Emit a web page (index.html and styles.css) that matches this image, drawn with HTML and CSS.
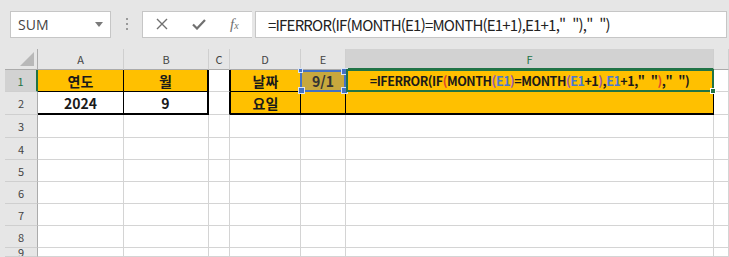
FILE: index.html
```html
<!DOCTYPE html>
<html lang="ko">
<head>
    <meta charset="UTF-8">
    <title>IFERROR 날짜</title>
    <link rel="stylesheet" href="styles.css">
</head>
<body>
    <!-- Formula bar -->
    <div class="formula-bar">
        <div class="name-box">
            <span class="name-text">SUM</span>
            <svg class="drop" width="8" height="5" viewBox="0 0 8 5"><path d="M0 0 L8 0 L4 5 Z" fill="#7a7a7a"/></svg>
        </div>
        <div class="grip"><i></i><i></i><i></i></div>
        <div class="fx-buttons">
            <svg width="12" height="12" viewBox="0 0 12 12"><path d="M1 1 L11 11 M11 1 L1 11" stroke="#707070" stroke-width="1.4"/></svg>
            <svg width="14" height="12" viewBox="0 0 14 12"><path d="M1 6.5 L5 10.5 L13 2" stroke="#707070" stroke-width="2.2" fill="none"/></svg>
            <span class="fx">f<sub>x</sub></span>
        </div>
        <div class="formula-input">=IFERROR(IF(MONTH(E1)=MONTH(E1+1),E1+1,"&nbsp; "),"&nbsp; ")</div>
    </div>

    <!-- Sheet -->
    <div class="sheet">
        <div class="corner"><span class="tri"></span></div>
        <div class="col-head">A</div>
        <div class="col-head">B</div>
        <div class="col-head">C</div>
        <div class="col-head">D</div>
        <div class="col-head">E</div>
        <div class="col-head selected">F</div>
        <div class="col-head last"></div>

        <div class="row-head selected">1</div>
        <div class="cell gold bold b-right b-bottom">연도</div>
        <div class="cell gold bold thick-right b-bottom">월</div>
        <div class="cell b-right-only"></div>
        <div class="cell gold bold left-thick b-right b-bottom">날짜</div>
        <div class="cell olive bold b-right b-bottom">9/1
            <span class="ref-box"><i class="h tl"></i><i class="h tr"></i><i class="h bl"></i><i class="h br"></i></span>
        </div>
        <div class="cell gold bold formula-cell">=IFERROR(IF<span class="red">(</span>MONTH<span class="purple">(</span><span class="blue">E1</span><span class="purple">)</span>=MONTH<span class="purple">(</span><span class="blue">E1</span>+1<span class="purple">)</span>,<span class="blue">E1</span>+1,"&nbsp; "<span class="red">)</span>,"&nbsp; ")
            <span class="active"><i class="fill-handle"></i></span>
        </div>
        <div class="cell"></div>

        <div class="row-head">2</div>
        <div class="cell bold b-right thick-bottom">2024</div>
        <div class="cell bold thick-right thick-bottom">9</div>
        <div class="cell b-right-only"></div>
        <div class="cell gold bold left-thick b-right thick-bottom">요일</div>
        <div class="cell gold b-right thick-bottom"></div>
        <div class="cell gold b-right thick-bottom"></div>
        <div class="cell"></div>
    </div>
    <div class="sheet rest" id="rest"></div>

    <script>
        // Empty rows 3 to 9
        const rest = document.getElementById('rest');
        for (let r = 3; r <= 9; r++) {
            let html = `<div class="row-head">${r}</div>`;
            for (let c = 0; c < 7; c++) {
                html += '<div class="cell"></div>';
            }
            rest.insertAdjacentHTML('beforeend', html);
        }
    </script>
</body>
</html>
```

FILE: styles.css
```css
/* Page reset */
body, html {
    margin: 0;
    padding: 0;
    height: 100%;
    overflow: hidden;
    background: #e6e6e6;
    font-family: "Noto Sans CJK KR", "Noto Sans", sans-serif;
}

/* Formula bar */
.formula-bar {
    display: flex;
    align-items: center;
    height: 48px;
    padding: 0 2px 0 10px;
    box-sizing: border-box;
}

.name-box {
    width: 101px;
    height: 27px;
    box-sizing: border-box;
    background: #fff;
    border: 1px solid #c6c6c6;
    display: flex;
    align-items: center;
    justify-content: space-between;
    padding: 0 7px 0 7px;
}

.name-text {
    font-family: "Open Sans", sans-serif;
    font-size: 14px;
    color: #444;
}

.grip {
    width: 31px;
    display: flex;
    flex-direction: column;
    align-items: center;
    gap: 3px;
}

.grip i {
    width: 2px;
    height: 2px;
    background: #9a9a9a;
}

.fx-buttons {
    width: 110px;
    height: 27px;
    box-sizing: border-box;
    background: #fff;
    border: 1px solid #c6c6c6;
    border-right: none;
    display: flex;
    align-items: center;
    gap: 24px;
    padding-left: 13px;
}

.fx {
    font-family: "Liberation Serif", serif;
    font-style: italic;
    font-size: 15px;
    color: #707070;
    line-height: 1;
}

.fx sub {
    font-size: 10px;
    vertical-align: 0;
}

.formula-input {
    flex: 1;
    height: 27px;
    margin-left: 3px;
    box-sizing: border-box;
    background: #fff;
    border: 1px solid #c6c6c6;
    padding-left: 12px;
    font-size: 15px;
    letter-spacing: -0.8px;
    line-height: 25px;
    color: #222;
    white-space: nowrap;
    overflow: hidden;
}

/* Sheet grid */
.sheet {
    display: grid;
    grid-template-columns: 33px 86px 85px 21px 71px 45px 368px 1fr;
    grid-template-rows: 21px 22px 23px;
    margin-left: 5px;
    margin-top: 1px;
    background: #fff;
}

.sheet.rest {
    margin-top: 0;
    grid-template-rows: 23px repeat(5, 22px) 9px;
    overflow: hidden;
}

.corner,
.col-head,
.row-head {
    background: #e6e6e6;
    color: #444;
    font-size: 11px;
    display: flex;
    align-items: center;
    justify-content: center;
    box-sizing: border-box;
}

.corner {
    position: relative;
    border-right: 1px solid #ababab;
    border-bottom: 1px solid #ababab;
}

.corner .tri {
    position: absolute;
    right: 3px;
    bottom: 3px;
    width: 0;
    height: 0;
    border-left: 14px solid transparent;
    border-bottom: 14px solid #b8b8b8;
}

.col-head {
    border-right: 1px solid #cfcfcf;
    border-bottom: 1px solid #ababab;
}

.col-head.selected {
    background: #d2d2d2;
    color: #217346;
    border-bottom: 2px solid #217346;
}

.row-head {
    border-right: 1px solid #ababab;
    border-bottom: 1px solid #cfcfcf;
    overflow: hidden;
}

.row-head.selected {
    background: #d2d2d2;
    color: #217346;
    border-right: 2px solid #217346;
}

.cell {
    position: relative;
    box-sizing: border-box;
    border-right: 1px solid #d4d4d4;
    border-bottom: 1px solid #d4d4d4;
    background: #fff;
    font-size: 14px;
    color: #1a1a1a;
    display: flex;
    align-items: center;
    justify-content: center;
    white-space: nowrap;
}

.bold { font-weight: bold; }
.gold { background: #ffc000; }
.olive { background: #c8a83d; color: #333; }

/* Range borders */
.b-right { border-right-color: #000; }
.b-bottom { border-bottom-color: #000; }
.b-right-only { border-right-color: #000; }
.thick-right { border-right: 2px solid #000; }
.thick-bottom { border-bottom: 2px solid #000; }
.left-thick { border-left: 1px solid #000; }

/* Formula being edited in F1 */
.formula-cell {
    border-right: 1px solid #000;
    border-bottom: 1px solid #000;
    font-size: 12.5px;
    letter-spacing: -0.45px;
}

.red { color: #e0452b; }
.purple { color: #9a5ab0; }
.blue { color: #4a78d0; }

/* Reference highlight on E1 */
.ref-box {
    position: absolute;
    top: 0;
    left: -1px;
    right: -1px;
    bottom: -1px;
    border: 2px solid #4472c4;
    z-index: 2;
}

.ref-box .h {
    position: absolute;
    width: 5px;
    height: 5px;
    background: #4472c4;
    border: 1px solid #dbe4f5;
}

.h.tl { top: -4px; left: -4px; width: 3px; height: 3px; }
.h.tr { top: -4px; right: -4px; }
.h.bl { bottom: -4px; left: -4px; }
.h.br { bottom: -4px; right: -4px; }

/* Active cell */
.active {
    position: absolute;
    top: -1px;
    left: 0;
    right: -1px;
    bottom: -1px;
    border: 2px solid #217346;
    z-index: 3;
}

.fill-handle {
    position: absolute;
    right: -4px;
    bottom: -4px;
    width: 4px;
    height: 4px;
    background: #217346;
    border: 1px solid #fff;
}
```
